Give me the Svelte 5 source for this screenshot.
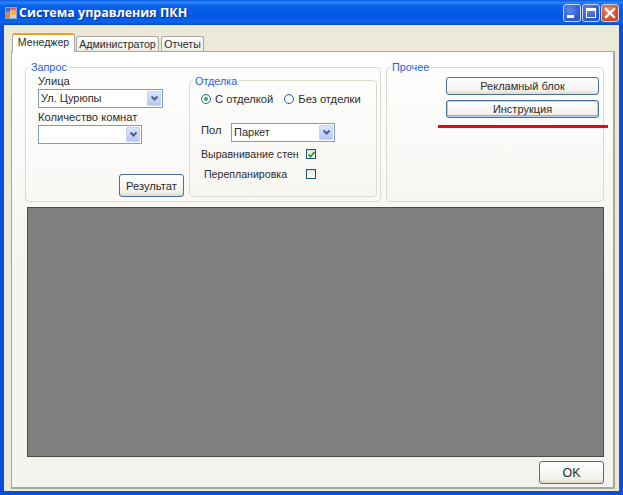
<script>
  const radios = [
    { label: 'С отделкой', on: true },
    { label: 'Без отделки', on: false }
  ];
</script>

<div class="window">
  <header class="titlebar">
    <svg class="appicon" width="16" height="16" viewBox="0 0 16 16">
      <rect x="2.5" y="2.5" width="11" height="11" fill="#dfe6f2" stroke="#9aa6c0" stroke-width="0.7"/>
      <rect x="3" y="3" width="4" height="4.5" fill="#3a6fd8"/>
      <rect x="7" y="3" width="6" height="2.5" fill="#e8604a"/>
      <rect x="7.5" y="6" width="5.5" height="4.5" fill="#f2b630"/>
      <rect x="3" y="8" width="4" height="5" fill="#e8792a"/>
      <rect x="7.5" y="11" width="5.5" height="2" fill="#c9d3e6"/>
    </svg>
    <span class="title">Система управления ПКН</span>
    <div class="controls">
      <div class="ctl"><span class="min"></span></div>
      <div class="ctl"><span class="max"></span></div>
      <div class="ctl close">
        <svg width="14" height="14" viewBox="0 0 14 14"><path d="M3 3l8 8M11 3l-8 8" stroke="#fff" stroke-width="2.4" stroke-linecap="square"/></svg>
      </div>
    </div>
  </header>

  <div class="client">
    <nav class="tabs">
      <div class="tab active">Менеджер</div>
      <div class="tab admin">Администратор</div>
      <div class="tab reports">Отчеты</div>
    </nav>

    <main class="panel">
      <div class="top">
        <section class="group query">
          <div class="legend">Запрос</div>
          <div class="querycol">
            <div class="lbl street">Улица</div>
            <div class="combo wide"><span>Ул. Цурюпы</span><i class="arrow"><svg width="9" height="7" viewBox="0 0 9 7"><path d="M1.5 1.5L4.5 4.5L7.5 1.5" fill="none" stroke="#4d6185" stroke-width="2"/></svg></i></div>
            <div class="lbl rooms">Количество комнат</div>
            <div class="combo"><span></span><i class="arrow"><svg width="9" height="7" viewBox="0 0 9 7"><path d="M1.5 1.5L4.5 4.5L7.5 1.5" fill="none" stroke="#4d6185" stroke-width="2"/></svg></i></div>
            <button class="btn result">Результат</button>
          </div>
          <section class="group finish">
            <div class="legend">Отделка</div>
            <div class="radios">
              {#each radios as r}
                <label class="radio">
                  <span class="dot" class:on={r.on}></span>{r.label}
                </label>
              {/each}
            </div>
            <div class="floor">
              <span class="floorlbl">Пол</span>
              <div class="combo"><span>Паркет</span><i class="arrow"><svg width="9" height="7" viewBox="0 0 9 7"><path d="M1.5 1.5L4.5 4.5L7.5 1.5" fill="none" stroke="#4d6185" stroke-width="2"/></svg></i></div>
            </div>
            <div class="check first">
              <span class="checktext">Выравнивание стен</span>
              <span class="box"><svg width="9" height="9" viewBox="0 0 9 9"><path d="M1.5 4.5L3.6 6.6L7.5 2" fill="none" stroke="#21a121" stroke-width="1.8"/></svg></span>
            </div>
            <div class="check second">
              <span class="checktext">Перепланировка</span>
              <span class="box"></span>
            </div>
          </section>
        </section>

        <section class="group other">
          <div class="legend">Прочее</div>
          <button class="btn wideb">Рекламный блок</button>
          <button class="btn wideb focus">Инструкция</button>
          <div class="redline"></div>
        </section>
      </div>

      <div class="canvas"></div>

      <div class="footer"><button class="btn ok">OK</button></div>
    </main>
  </div>
</div>

<style>
  :global(body) { margin: 0; }
  .window {
    width: 623px; height: 495px; box-sizing: border-box;
    display: flex; flex-direction: column;
    background: #0a4fdc; padding: 0 4px 4px;
    font: 11.2px "Liberation Sans", Arial, sans-serif; color: #2c2c2c;
    overflow: hidden;
  }
  .titlebar {
    height: 25px; flex: none; margin: 0 -4px; padding: 0 4px 0 3px;
    display: flex; align-items: center;
    background: linear-gradient(#0a5ae8 0%, #2b84f6 10%, #0a62ea 22%, #0256e4 65%, #0a64ee 88%, #0449d0 100%);
  }
  .appicon { flex: none; margin-top: 1px; }
  .title {
    color: #fff; font: bold 12.5px "Open Sans", sans-serif;
    text-shadow: 1px 1px 1px #0a2f90;
  }
  .controls { margin-left: auto; display: flex; gap: 1px; margin-top: 1px; }
  .ctl {
    width: 18px; height: 18px; box-sizing: border-box; border: 1px solid #c9d6f6; border-radius: 3px;
    background: radial-gradient(circle at 35% 30%, #5d88e8, #2a55d0 75%);
    position: relative; display: flex; align-items: center; justify-content: center;
  }
  .ctl.close { background: radial-gradient(circle at 35% 30%, #e88a62, #cf4520 75%); }
  .min { position: absolute; left: 3px; bottom: 3px; width: 7px; height: 3px; background: #fff; }
  .max { width: 10px; height: 10px; box-sizing: border-box; border: 1px solid #fff; border-top-width: 3px; }

  .client {
    flex: 1; min-height: 0; background: #ece9d8;
    padding: 8px 4px 2px 7px; display: flex; flex-direction: column;
  }
  .tabs { display: flex; align-items: flex-end; padding-left: 1px; height: 18px; flex: none; font-size: 10.6px; }
  .tab {
    height: 15px; box-sizing: border-box; margin-right: 1px; text-align: center;
    border: 1px solid #a9a89f; border-bottom: 0; border-radius: 3px 3px 0 0;
    background: linear-gradient(#fff, #ecebe4); white-space: nowrap; line-height: 14px;
  }
  .admin { width: 83px; }
  .reports { width: 43px; margin-left: 1px; }
  .tab.active {
    width: 63px; height: 19px; line-height: 15px; border-top: 2px solid #f0a020;
    background: #fff; position: relative; z-index: 1; margin-bottom: -1px;
  }
  .panel {
    flex: 1; min-height: 0; box-sizing: border-box;
    border: 1px solid #a9a89f; border-right-width: 2px; border-bottom-width: 2px;
    background: linear-gradient(#fff 0%, #f4f3ee 55%);
    padding: 15px 9px 3px 14px; display: flex; flex-direction: column;
  }
  .top { display: flex; gap: 5px; height: 135px; flex: none; margin-left: -1px; }
  .group {
    position: relative; box-sizing: border-box;
    border: 1px solid #dcdacd; border-radius: 4px;
  }
  .legend {
    position: absolute; top: -8px; left: 3px; padding: 0 2px; color: #2a5fe0;
    background: #fdfdfc; line-height: 14px; font-size: 10.8px;
  }
  .query {
    width: 356px; display: flex; padding: 7px 2px 3px 12px;
  }
  .querycol { width: 151px; display: flex; flex-direction: column; align-items: flex-start; flex: none; }
  .lbl { line-height: 13px; }
  .street { margin-bottom: 1px; }
  .rooms { margin: 3px 0 1px 0; }
  .combo {
    width: 104px; height: 19px; box-sizing: border-box; flex: none;
    border: 1px solid #7f9db9; background: #fff; display: flex; align-items: center; justify-content: space-between;
    padding: 1px; line-height: 15px; font-size: 11px;
  }
  .combo.wide { width: 125px; }
  .combo span { padding-left: 1px; }
  .arrow {
    width: 14px; height: 15px; flex: none; display: flex; align-items: center; justify-content: center;
    background: linear-gradient(#dbe5fc, #b4c8f6); border: 1px solid #c3d3fb; box-sizing: border-box; border-radius: 1px;
  }
  .btn {
    font: inherit; color: #2c2c2c; box-sizing: border-box; padding: 0; flex: none;
    border: 1px solid #4a7098; border-radius: 3px;
    background: linear-gradient(#fff, #f2f1ea 80%, #dcd8cb);
  }
  .result { width: 65px; height: 23px; margin-top: 30px; margin-left: 81px; }
  .finish {
    width: 188px; height: 117px; margin-top: 5px; flex: none; background: linear-gradient(#fdfdfc, #f7f6f2);
    padding: 10px 0 0 0;
  }
  .finish .legend { left: 3px; top: -7px; }
  .radios { display: flex; padding-left: 11px; gap: 11px; }
  .radio { display: flex; align-items: center; gap: 4px; line-height: 16px; }
  .dot {
    width: 10px; height: 10px; border: 1px solid #2c628b; border-radius: 50%; box-sizing: border-box;
    background: linear-gradient(#ececec, #fff); display: flex; align-items: center; justify-content: center;
  }
  .dot.on::after { content: ""; width: 4px; height: 4px; border-radius: 50%; background: #36b04a; }
  .floor { display: flex; align-items: flex-start; margin-top: 16px; padding-left: 11px; }
  .floorlbl { width: 30px; line-height: 14px; }
  .check { display: flex; align-items: center; height: 14px; font-size: 10.6px; }
  .first { margin-top: 5px; padding-left: 11px; }
  .second { margin-top: 6px; padding-left: 14px; }
  .checktext { white-space: nowrap; }
  .first .checktext { width: 105px; }
  .second .checktext { width: 102px; }
  .box {
    width: 10px; height: 10px; box-sizing: border-box; border: 1px solid #1c5180;
    background: linear-gradient(#e4e4de, #fff); display: flex; flex: none;
  }
  .box svg { margin: -0.5px; }
  .other {
    width: 218px; padding: 9px 0 0 59px; display: flex; flex-direction: column; gap: 5px;
    background: linear-gradient(#fefefe, #f7f6f2);
  }
  .wideb { width: 153px; height: 18px; line-height: 14px; font-size: 11px; }
  .focus { box-shadow: inset 0 0 0 1px #b7d0f2, inset 0 -1px 0 1px #8fb0e0; }
  .redline {
    position: absolute; left: 51px; top: 57px; width: 170px; height: 2.5px; background: #f5000f;
  }
  .canvas {
    height: 250px; flex: none; box-sizing: border-box; margin: 5px 0 0 1px;
    background: #808080; border: 1px solid #4a4a4a;
  }
  .footer { display: flex; justify-content: flex-end; padding-top: 4px; }
  .ok { width: 65px; height: 23px; font-size: 12.5px; }
</style>
